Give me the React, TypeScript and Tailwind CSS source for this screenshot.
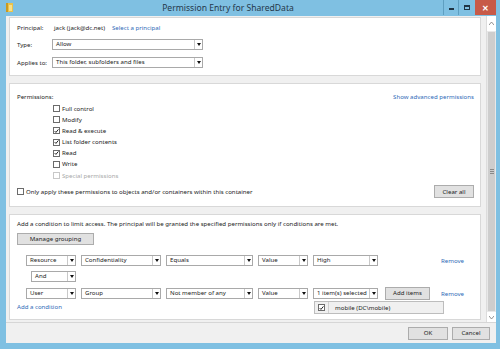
import React from "react";

const font = { fontFamily: '"Noto Sans", "Open Sans", sans-serif' };

function Check({ on, disabled }: { on?: boolean; disabled?: boolean }) {
	return (
		<span
			className={`w-[7px] h-[7px] flex items-center justify-center border bg-white shrink-0 ${
				disabled ? "border-[#c8c8c8]" : "border-[#6b6b6b]"
			}`}
		>
			{on && (
				<svg width="6" height="6" viewBox="0 0 6 6">
					<path d="M0.8 3.1 L2.3 4.7 L5.3 1.1" stroke="#111" strokeWidth="1.1" fill="none" />
				</svg>
			)}
		</span>
	);
}

function Select({ text, w, arrow = 8 }: { text: string; w: number; arrow?: number }) {
	return (
		<div
			className="h-[11px] flex items-stretch border border-[#a9a9a9] bg-white shrink-0"
			style={{ width: w }}
		>
			<span className="flex-1 pl-[3px] flex items-center leading-none text-[#222] whitespace-nowrap overflow-hidden">
				{text}
			</span>
			<span
				className="border-l border-[#c9c9c9] flex items-center justify-center"
				style={{ width: arrow }}
			>
				<svg width="4" height="3" viewBox="0 0 4 3">
					<path d="M0 0 H4 L2 3 Z" fill="#111" />
				</svg>
			</span>
		</div>
	);
}

function Button({ text, w, h = 13 }: { text: string; w: number; h?: number }) {
	return (
		<div
			className="flex items-center justify-center border border-[#acacac] bg-[#e1e1e1] text-[#222] leading-none shrink-0"
			style={{ width: w, height: h }}
		>
			{text}
		</div>
	);
}

const perms: [string, boolean, boolean?][] = [
	["Full control", false],
	["Modify", false],
	["Read & execute", true],
	["List folder contents", true],
	["Read", true],
	["Write", false],
	["Special permissions", false, true],
];

export default function App() {
	return (
		<div
			className="w-[500px] h-[349px] bg-[#7fc0e2] flex flex-col text-[6.1px] text-[#222] overflow-hidden"
			style={font}
		>
			{/* title bar */}
			<div className="h-[16px] flex items-start relative shrink-0">
				<div className="pl-[6px] pt-[3px]">
					<svg width="7" height="9" viewBox="0 0 7 9">
						<rect x="0" y="0" width="7" height="9" fill="#e9c24a" />
						<rect x="0" y="0" width="2" height="9" fill="#c99a22" />
						<rect x="3" y="2" width="3" height="6" fill="#f7df8a" />
					</svg>
				</div>
				<div className="flex-1 text-center text-[8.6px] text-[#25384a] pt-[2px] leading-[12px]">
					Permission Entry for SharedData
				</div>
				<div className="flex h-[15px] mr-[4px]">
					<div className="w-[15px] h-full flex items-end justify-center pb-[5px] border-l border-[#5e9fc1]">
						<span className="w-[5px] h-[2px] bg-[#1f3444]" />
					</div>
					<div className="w-[17px] h-full flex items-center justify-center border-l border-[#5e9fc1]">
						<span className="w-[6px] h-[5px] border border-[#1f3444] border-t-2" />
					</div>
					<div className="w-[21px] h-full flex items-center justify-center bg-[#c75a48] text-white text-[8px] font-bold">
						✕
					</div>
				</div>
			</div>

			{/* body */}
			<div className="flex-1 flex flex-col ml-[6px] mr-[4px] mb-[6px] bg-[#f0f0f0]">
				<div className="h-[307px] flex border-b border-[#d6d6d6]">
					{/* scroll content */}
					<div className="flex-1 flex flex-col gap-[7px] pl-[3px] pr-[5px] pt-[1px]">
						{/* principal panel */}
						<div className="h-[59px] bg-white border border-[#d8d8d8] pl-[7px] flex flex-col">
							<div className="flex items-center h-[19px] pt-[1px]">
								<span className="w-[37px]">Principal:</span>
								<span>jack (jack@dc.net)</span>
								<span className="ml-[7px] text-[#2e6ab7]">Select a principal</span>
							</div>
							<div className="flex items-center h-[11px] mt-[2px]">
								<span className="w-[35px]">Type:</span>
								<Select text="Allow" w={151} />
							</div>
							<div className="flex items-center h-[11px] mt-[7px]">
								<span className="w-[35px]">Applies to:</span>
								<Select text="This folder, subfolders and files" w={151} />
							</div>
						</div>

						{/* permissions panel */}
						<div className="h-[124px] bg-white border border-[#d8d8d8] pl-[7px] pr-[6px] flex flex-col">
							<div className="flex items-center justify-between h-[11px] mt-[7px]">
								<span>Permissions:</span>
								<span className="text-[#2e6ab7]">Show advanced permissions</span>
							</div>
							<div className="flex flex-col pl-[36px] mt-[1px]">
								{perms.map(([label, on, dis]) => (
									<div key={label} className="flex items-center gap-[2px] h-[11.2px] leading-none">
										<Check on={on} disabled={dis} />
										<span className={dis ? "text-[#a8a8a8]" : ""}>{label}</span>
									</div>
								))}
							</div>
							<div className="flex items-center justify-between mt-[4px]">
								<div className="flex items-center gap-[2px]">
									<Check />
									<span>
										Only apply these permissions to objects and/or containers within this container
									</span>
								</div>
								<Button text="Clear all" w={40} />
							</div>
						</div>

						{/* condition panel */}
						<div className="h-[106px] bg-white border border-[#d8d8d8] pl-[7px] pr-[16px] flex flex-col">
							<div className="h-[11px] flex items-center mt-[3px]">
								Add a condition to limit access. The principal will be granted the specified permissions only if conditions are met.
							</div>
							<div className="mt-[4px]">
								<Button text="Manage grouping" w={77} h={12} />
							</div>
							<div className="flex items-center gap-[5px] pl-[9px] mt-[10px]">
								<Select text="Resource" w={50} />
								<Select text="Confidentiality" w={80} />
								<Select text="Equals" w={87} />
								<Select text="Value" w={50} />
								<Select text="High" w={65} />
								<span className="ml-auto text-[#2e6ab7]">Remove</span>
							</div>
							<div className="pl-[14px] mt-[5px]">
								<Select text="And" w={45} />
							</div>
							<div className="flex items-center gap-[5px] pl-[9px] mt-[5px]">
								<Select text="User" w={50} />
								<Select text="Group" w={80} />
								<Select text="Not member of any" w={87} />
								<Select text="Value" w={50} />
								<div className="relative">
									<Select text="1 item(s) selected" w={65} />
									<div className="absolute left-[1px] top-[13px] w-[130px] h-[13px] bg-[#f0f0f0] border border-[#bdbdbd] flex items-center z-10">
										<span className="w-[14px] h-full flex items-center justify-center border-r border-[#d0d0d0]">
											<Check on />
										</span>
										<span className="pl-[6px]">mobile (DC\mobile)</span>
									</div>
								</div>
								<div className="ml-[2px]">
									<Button text="Add items" w={45} />
								</div>
								<span className="ml-auto text-[#2e6ab7]">Remove</span>
							</div>
							<div className="text-[#2e6ab7] mt-[2px]">Add a condition</div>
						</div>
					</div>

					{/* scrollbar */}
					<div className="w-[10px] flex flex-col border-l border-[#dcdcdc] bg-[#e8e8e8]">
						<div className="h-[15px] bg-white flex items-center justify-center">
							<svg width="5" height="3" viewBox="0 0 5 3">
								<path d="M0 3 L2.5 0 L5 3" stroke="#777" strokeWidth="0.8" fill="none" />
							</svg>
						</div>
						<div className="flex-1 mx-[1px] my-[1px] bg-[#cdcdcd] flex items-center justify-center">
							<div className="flex flex-col gap-[1px]">
								<span className="w-[4px] h-px bg-[#888]" />
								<span className="w-[4px] h-px bg-[#888]" />
								<span className="w-[4px] h-px bg-[#888]" />
							</div>
						</div>
						<div className="h-[10px] bg-white flex items-center justify-center">
							<svg width="5" height="3" viewBox="0 0 5 3">
								<path d="M0 0 L2.5 3 L5 0" stroke="#777" strokeWidth="0.8" fill="none" />
							</svg>
						</div>
					</div>
				</div>

				{/* buttons */}
				<div className="flex-1 flex items-center justify-end gap-[4px] pr-[6px]">
					<Button text="OK" w={40} h={13} />
					<Button text="Cancel" w={38} h={13} />
				</div>
			</div>
		</div>
	);
}
